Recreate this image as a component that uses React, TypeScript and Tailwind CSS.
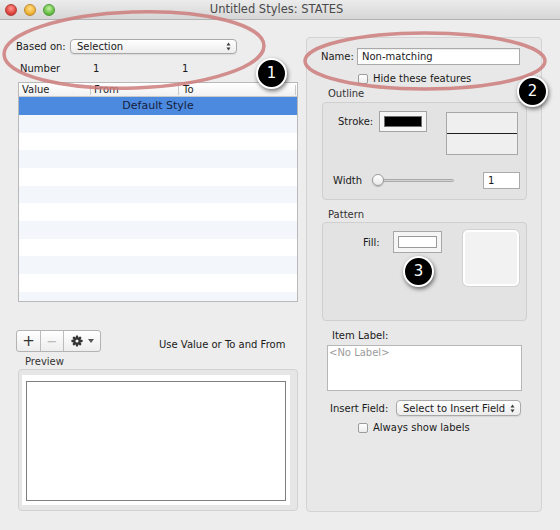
import React from "react";

function PopArrows() {
  return (
    <svg width="5" height="9" viewBox="0 0 5 9">
      <path d="M0.5 3.6 L2.5 0.6 L4.5 3.6 Z" fill="#3a3a3a" />
      <path d="M0.5 5.4 L2.5 8.4 L4.5 5.4 Z" fill="#3a3a3a" />
    </svg>
  );
}

function Checkbox() {
  return (
    <div className="w-[10px] h-[10px] rounded-[2px] border border-[#9c9c9c] bg-gradient-to-b from-white to-[#ececec] shrink-0" />
  );
}

function Gear() {
  return (
    <svg width="12" height="12" viewBox="-12 -12 24 24">
      {[0, 45, 90, 135].map((a) => (
        <rect key={a} x="-2.3" y="-11" width="4.6" height="22" rx="0.8" fill="#333" transform={`rotate(${a})`} />
      ))}
      <circle r="7.6" fill="#333" />
      <circle r="3.1" fill="#f1f1f1" />
    </svg>
  );
}

function Badge({ n, className }: { n: string; className: string }) {
  return (
    <div
      className={
        "absolute w-[31px] h-[31px] rounded-full bg-black border-2 border-white shadow-[1px_2px_4px_rgba(0,0,0,0.55)] flex items-center justify-center text-white text-[15px] leading-none font-['DejaVu_Sans',sans-serif] " +
        className
      }
    >
      {n}
    </div>
  );
}

export default function App() {
  const rows = Array.from({ length: 11 }, (_, i) => i);
  return (
    <div className="relative w-[560px] h-[530px] overflow-hidden bg-[#ededed] font-['DejaVu_Sans',sans-serif] text-[10px] text-[#1a1a1a]">
      {/* Title bar */}
      <div className="relative h-[20px] bg-gradient-to-b from-[#ececec] to-[#d6d6d6] border-b border-[#b2b2b2] flex items-center">
        <div className="flex items-center gap-[7px] pl-[5px]">
          <div className="w-[12px] h-[12px] rounded-full bg-[radial-gradient(circle_at_50%_35%,#ff9a92,#e0443e_60%,#b22a25)] border border-[#b3403a]" />
          <div className="w-[12px] h-[12px] rounded-full bg-[radial-gradient(circle_at_50%_35%,#ffe08a,#f0b43a_60%,#c98a1c)] border border-[#c08a2c]" />
          <div className="w-[12px] h-[12px] rounded-full bg-[radial-gradient(circle_at_50%_35%,#c4f0a0,#6cc04a_60%,#3f9529)] border border-[#4c9a38]" />
        </div>
        <div className="flex-1 text-center text-[11.5px] text-[#4a4a4a] pr-[62px]">Untitled Styles: STATES</div>
      </div>

      <div className="flex">
        {/* Left column */}
        <div className="ml-[16px] w-[282px] flex flex-col">
          <div className="mt-[19px] h-[15px] flex items-center">
            <div className="w-[54px]">Based on:</div>
            <div className="w-[167px] h-[15px] rounded-[4px] border border-[#a9a9a9] bg-gradient-to-b from-white to-[#ececec] shadow-[0_1px_1px_rgba(0,0,0,0.08)] flex items-center justify-between pl-[6px] pr-[5px]">
              <span>Selection</span>
              <PopArrows />
            </div>
          </div>
          <div className="mt-[9px] h-[11px] flex items-center pl-[4px] leading-[11px]">
            <div className="w-[73px]">Number</div>
            <div className="w-[89px]">1</div>
            <div>1</div>
          </div>
          {/* Table */}
          <div className="mt-[8px] ml-[2px] w-[280px] h-[220px] border border-[#b9b9b9] bg-white overflow-hidden flex flex-col">
            <div className="h-[14px] shrink-0 flex items-center bg-gradient-to-b from-white to-[#f1f1f1] border-b border-[#c9c9c9] text-[10px] text-[#222]">
              <div className="w-[71px] pl-[3px]">Value</div>
              <div className="w-px h-[10px] bg-[#c8c8c8]" />
              <div className="w-[87px] pl-[3px]">From</div>
              <div className="w-px h-[10px] bg-[#c8c8c8]" />
              <div className="w-[116px] pl-[4px]">To</div>
              <div className="w-px h-[10px] bg-[#c8c8c8]" />
            </div>
            <div className="h-[18px] shrink-0 bg-[#4b8ade] flex items-center justify-center text-[11px] text-[#17213f]">
              Default Style
            </div>
            {rows.map((i) => (
              <div key={i} className={"h-[17.67px] shrink-0 " + (i % 2 === 0 ? "bg-[#f3f6fa]" : "bg-white")} />
            ))}
          </div>
          {/* Buttons */}
          <div className="mt-[28px] h-[22px] flex items-center">
            <div className="h-[22px] flex rounded-[3px] border border-[#b3b3b3] bg-gradient-to-b from-white to-[#ededed] overflow-hidden">
              <div className="w-[24px] h-full flex items-center justify-center border-r border-[#bdbdbd] text-[15px] text-[#333] leading-none">+</div>
              <div className="w-[23px] h-full flex items-center justify-center border-r border-[#bdbdbd] text-[13px] text-[#b0b0b0] leading-none">−</div>
              <div className="w-[36px] h-full flex items-center justify-center gap-[5px]">
                <Gear />
                <svg width="6" height="4" viewBox="0 0 6 4">
                  <path d="M0 0 L6 0 L3 4 Z" fill="#555" />
                </svg>
              </div>
            </div>
            <div className="ml-[58px] pt-[6px]">Use Value or To and From</div>
          </div>
          <div className="mt-[4px] h-[12px] leading-[12px] pl-[9px] text-[#333]">Preview</div>
          <div className="mt-[1px] ml-[2px] w-[280px] h-[142px] rounded-[4px] border border-[#d2d2d2] bg-[#e6e6e6] pl-[3px] pr-[7px] pt-[5px] pb-[5px]">
            <div className="w-full h-full bg-white pl-[4px] pr-[4px] pt-[6px] pb-[4px]">
              <div className="w-full h-full border-[1.5px] border-[#7f7f7f] bg-white" />
            </div>
          </div>
        </div>

        {/* Right column */}
        <div className="ml-[8px] mt-[17px] w-[236px] h-[475px] rounded-[4px] border border-[#d3d3d3] bg-[#e8e8e8] flex flex-col">
          <div className="mt-[10px] h-[17px] flex items-center pl-[14px]">
            <div className="w-[36px]">Name:</div>
            <div className="w-[163px] h-[17px] border border-[#aaaaaa] bg-white flex items-center pl-[4px] shadow-[inset_0_1px_1px_rgba(0,0,0,0.08)]">
              Non-matching
            </div>
          </div>
          <div className="mt-[8px] h-[11px] flex items-center gap-[5px] pl-[51px]">
            <Checkbox />
            <span>Hide these features</span>
          </div>
          <div className="mt-[4px] h-[12px] leading-[12px] pl-[21px] text-[#333]">Outline</div>
          <div className="mt-[2px] ml-[15px] w-[205px] h-[98px] rounded-[4px] border border-[#cfcfcf] bg-[#e3e3e3] flex flex-col">
            <div className="mt-[8px] pl-[15px] flex items-start">
              <div className="w-[41px] h-[21px] flex items-center">Stroke:</div>
              <div className="w-[48px] h-[21px] border border-[#a3a3a3] bg-[#f6f6f6] p-[4px]">
                <div className="w-full h-full bg-black border border-[#707070]" />
              </div>
              <div className="ml-[19px] mt-[1px] w-[72px] h-[43px] border border-[#a8a8a8] bg-[#efefef] flex flex-col justify-center">
                <div className="h-[1.5px] bg-[#1f1f1f]" />
              </div>
            </div>
            <div className="mt-[17px] h-[17px] flex items-center pl-[10px]">
              <div className="w-[39px]">Width</div>
              <div className="relative w-[82px] h-[17px]">
                <div className="absolute left-0 right-0 top-[7px] h-[3px] rounded-full bg-[#d4d4d4] border border-[#a9a9a9]" />
                <div className="absolute left-0 top-[2px] w-[12px] h-[12px] rounded-full bg-gradient-to-b from-white to-[#e9e9e9] border border-[#9c9c9c] shadow-[0_1px_1px_rgba(0,0,0,0.2)]" />
              </div>
              <div className="ml-[29px] w-[37px] h-[17px] border border-[#aaaaaa] bg-white flex items-center pl-[4px]">1</div>
            </div>
          </div>
          <div className="mt-[9px] h-[12px] leading-[12px] pl-[21px] text-[#333]">Pattern</div>
          <div className="mt-[1px] ml-[15px] w-[205px] h-[99px] rounded-[4px] border border-[#cfcfcf] bg-[#e3e3e3]">
            <div className="mt-[7px] pl-[40px] flex items-start">
              <div className="mt-[1px] w-[30px] h-[22px] flex items-center">Fill:</div>
              <div className="mt-[1px] w-[49px] h-[22px] border border-[#a8a8a8] bg-[#f5f5f5] p-[4px]">
                <div className="w-full h-full bg-white border border-[#9a9a9a]" />
              </div>
              <div className="ml-[21px] w-[56px] h-[56px] rounded-[5px] border-2 border-white bg-[#f2f2f2] shadow-[0_0_0_1px_#d2d2d2]" />
            </div>
          </div>
          <div className="mt-[9px] h-[12px] leading-[12px] pl-[25px]">Item Label:</div>
          <div className="mt-[3px] ml-[20px] w-[195px] h-[46px] border border-[#b6b6b6] bg-white pl-[1px] pt-[1px] text-[#9b9b9b] leading-[12px]">
            &lt;No Label&gt;
          </div>
          <div className="mt-[9px] h-[16px] flex items-center pl-[23px]">
            <div className="w-[66px]">Insert Field:</div>
            <div className="w-[125px] h-[16px] rounded-[4px] border border-[#a9a9a9] bg-gradient-to-b from-white to-[#ececec] shadow-[0_1px_1px_rgba(0,0,0,0.08)] flex items-center justify-between pl-[6px] pr-[5px]">
              <span>Select to Insert Field</span>
              <PopArrows />
            </div>
          </div>
          <div className="mt-[6px] h-[11px] flex items-center gap-[5px] pl-[51px]">
            <Checkbox />
            <span>Always show labels</span>
          </div>
        </div>
      </div>

      {/* Annotation overlay */}
      <svg className="absolute left-0 top-0 pointer-events-none" width="560" height="530" viewBox="0 0 560 530">
        <ellipse cx="134" cy="50" rx="130" ry="38" transform="rotate(-2 134 50)" fill="none" stroke="#cd7b7b" strokeOpacity="0.85" strokeWidth="3.5" />
        <ellipse cx="425" cy="61" rx="120" ry="28" fill="none" stroke="#cd7b7b" strokeOpacity="0.85" strokeWidth="3.5" />
      </svg>
      <Badge n="1" className="left-[256px] top-[58px]" />
      <Badge n="2" className="left-[517px] top-[76px]" />
      <Badge n="3" className="left-[403px] top-[256px]" />
    </div>
  );
}
